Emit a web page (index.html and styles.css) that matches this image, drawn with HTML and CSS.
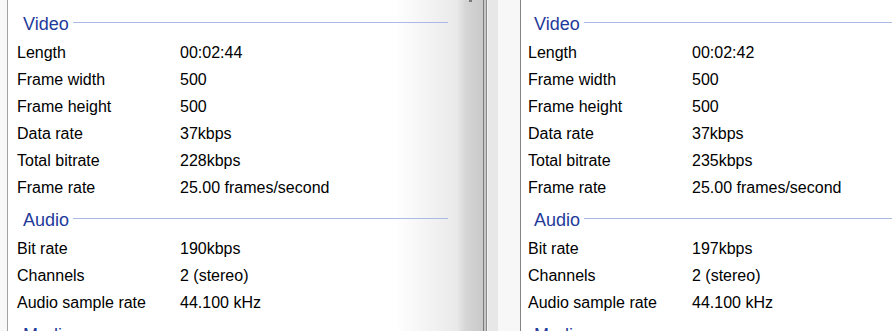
FILE: index.html
```html
<!DOCTYPE html>
<html lang="en">
<head>
  <meta charset="UTF-8">
  <meta name="viewport" content="width=device-width, initial-scale=1.0">
  <title>Compare Details</title>
  <link rel="stylesheet" href="styles.css">
</head>
<body>
  <div class="window">
    <!-- first file -->
    <section class="pane pane-left">
      <div class="group"><span>Video</span><i class="rule"></i></div>
      <div class="row"><span class="key">Length</span><span>00:02:44</span></div>
      <div class="row"><span class="key">Frame width</span><span>500</span></div>
      <div class="row"><span class="key">Frame height</span><span>500</span></div>
      <div class="row"><span class="key">Data rate</span><span>37kbps</span></div>
      <div class="row"><span class="key">Total bitrate</span><span>228kbps</span></div>
      <div class="row"><span class="key">Frame rate</span><span>25.00 frames/second</span></div>
      <div class="group"><span>Audio</span><i class="rule"></i></div>
      <div class="row"><span class="key">Bit rate</span><span>190kbps</span></div>
      <div class="row"><span class="key">Channels</span><span>2 (stereo)</span></div>
      <div class="row"><span class="key">Audio sample rate</span><span>44.100 kHz</span></div>
      <div class="group"><span>Media</span><i class="rule"></i></div>
    </section>

    <div class="splitter"><span class="grip"></span></div>
    <div class="gutter"></div>

    <!-- second file -->
    <section class="pane pane-right">
      <div class="group"><span>Video</span><i class="rule"></i></div>
      <div class="row"><span class="key">Length</span><span>00:02:42</span></div>
      <div class="row"><span class="key">Frame width</span><span>500</span></div>
      <div class="row"><span class="key">Frame height</span><span>500</span></div>
      <div class="row"><span class="key">Data rate</span><span>37kbps</span></div>
      <div class="row"><span class="key">Total bitrate</span><span>235kbps</span></div>
      <div class="row"><span class="key">Frame rate</span><span>25.00 frames/second</span></div>
      <div class="group"><span>Audio</span><i class="rule"></i></div>
      <div class="row"><span class="key">Bit rate</span><span>197kbps</span></div>
      <div class="row"><span class="key">Channels</span><span>2 (stereo)</span></div>
      <div class="row"><span class="key">Audio sample rate</span><span>44.100 kHz</span></div>
      <div class="group"><span>Media</span><i class="rule"></i></div>
    </section>
  </div>
</body>
</html>
```

FILE: styles.css
```css
body {
  margin: 0;
  height: 331px;
  overflow: hidden;
  background-color: #f8f8f8;
  font-family: "Liberation Sans", Arial, sans-serif;
  font-size: 16px;
  color: #000;
}
.window {
  display: flex;
  height: 331px;
}
.pane {
  padding-top: 5px;
  background: #fff;
}
.pane-left {
  width: 431px;
  flex: none;
  margin-left: 7px;
  padding-left: 9px;
  padding-right: 10px;
  border-left: 1px solid #a3a3a3;
  background: linear-gradient(to right, #fff 86%, #e9e9e9);
}
.pane-right {
  flex: 1;
  padding-left: 7px;
  border-left: 1px solid #848484;
}
.group {
  display: flex;
  padding: 4px 0 0 6px;
  height: 30px;
  line-height: 30px;
  font-size: 18px;
  color: #1e3a9a;
}
.group .rule {
  flex: 1;
  height: 1px;
  margin: 13px 0 0 4px;
  background-color: #a9bbe3;
}
.row {
  display: flex;
  height: 27px;
  line-height: 27px;
  white-space: nowrap;
}
.row .key {
  width: 163px;
  flex: none;
}
.pane-right .row .key {
  width: 164px;
}
.splitter {
  width: 25px;
  flex: none;
  background: linear-gradient(to right, #e6e6e6, #d6d6d6 30%, #c9c9c9);
}
.grip {
  display: block;
  width: 3px;
  height: 2px;
  margin-left: 11px;
  background-color: #7a7a7a;
}
.gutter {
  width: 37px;
  flex: none;
  background: linear-gradient(to right,
    #7b7b7b 0 1px, #c6c6c6 1px 3px, #8a8a8a 3px 4px,
    #f2f2f2 4px 5px, #e7e7e7 5px 15px, #f7f7f7 15px);
}
```
